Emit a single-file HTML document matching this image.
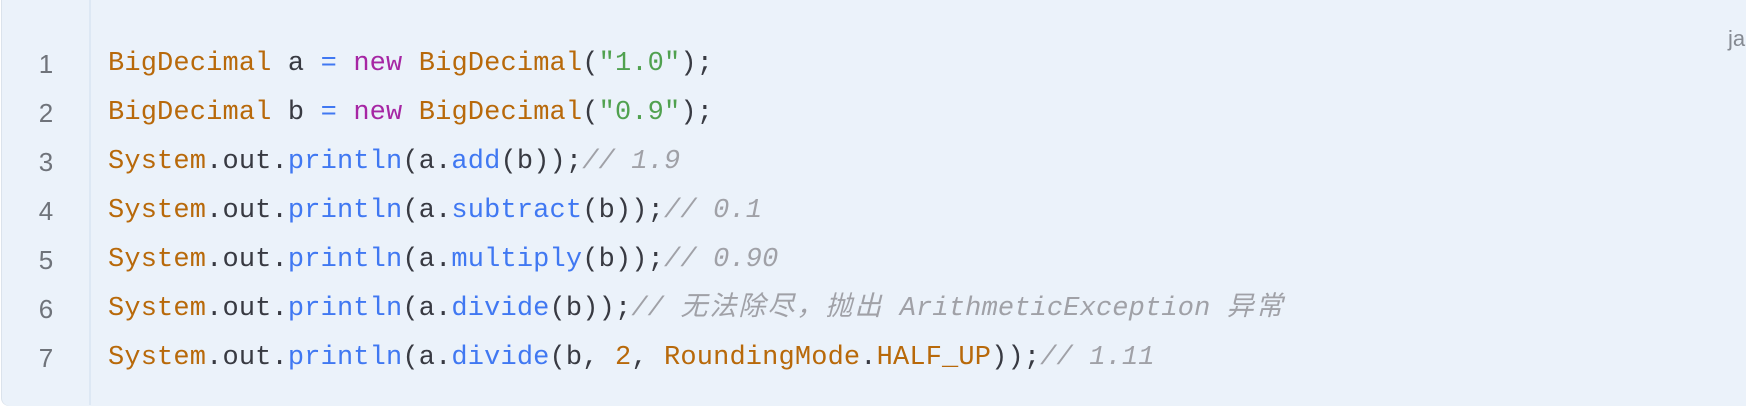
<!DOCTYPE html>
<html><head><meta charset="utf-8"><style>
html,body{margin:0;padding:0;width:1746px;height:408px;background:#fff;overflow:hidden}
.box{position:absolute;left:2px;top:-10px;width:1760px;height:416px;background:#ebf2fa;border-radius:8px;box-shadow:-1px 0 0 #dbe3ec}
.gut{position:absolute;left:89px;top:0;width:2px;height:405px;background:#dde8f4}
.ln{position:absolute;left:20px;width:52px;text-align:center;font:26px/34px "Liberation Sans",sans-serif;color:#6f737a}
.code{position:absolute;left:108px;font:27px/34px "Liberation Mono","Noto Sans CJK SC",monospace;letter-spacing:0.15px;color:#383a42;white-space:pre}
.t{color:#b8690a}.k{color:#a626a4}.o{color:#4078f2}.f{color:#4078f2}.s{color:#50a14f}.c{color:#a0a1a7;font-style:italic}
.cj{letter-spacing:2px}
.lang{position:absolute;left:1728px;top:26px;font:22px "Liberation Sans",sans-serif;color:#858a92}
</style></head><body>
<div class="box"></div><div class="gut"></div>
<div class="lang">ja</div>
<div class="ln" style="top:47px">1</div>
<div class="ln" style="top:96px">2</div>
<div class="ln" style="top:145px">3</div>
<div class="ln" style="top:194px">4</div>
<div class="ln" style="top:243px">5</div>
<div class="ln" style="top:292px">6</div>
<div class="ln" style="top:341px">7</div>
<div class="code" style="top:47px"><span class="t">BigDecimal</span> a <span class="o">=</span> <span class="k">new</span> <span class="t">BigDecimal</span>(<span class="s">"1.0"</span>);</div>
<div class="code" style="top:96px"><span class="t">BigDecimal</span> b <span class="o">=</span> <span class="k">new</span> <span class="t">BigDecimal</span>(<span class="s">"0.9"</span>);</div>
<div class="code" style="top:145px"><span class="t">System</span>.out.<span class="f">println</span>(a.<span class="f">add</span>(b));<span class="c">// 1.9</span></div>
<div class="code" style="top:194px"><span class="t">System</span>.out.<span class="f">println</span>(a.<span class="f">subtract</span>(b));<span class="c">// 0.1</span></div>
<div class="code" style="top:243px"><span class="t">System</span>.out.<span class="f">println</span>(a.<span class="f">multiply</span>(b));<span class="c">// 0.90</span></div>
<div class="code" style="top:292px"><span class="t">System</span>.out.<span class="f">println</span>(a.<span class="f">divide</span>(b));<span class="c">// <span class="cj">无法除尽，抛出</span> ArithmeticException <span class="cj">异常</span></span></div>
<div class="code" style="top:341px"><span class="t">System</span>.out.<span class="f">println</span>(a.<span class="f">divide</span>(b, <span class="t">2</span>, <span class="t">RoundingMode</span>.<span class="t">HALF_UP</span>));<span class="c">// 1.11</span></div>
</body></html>
